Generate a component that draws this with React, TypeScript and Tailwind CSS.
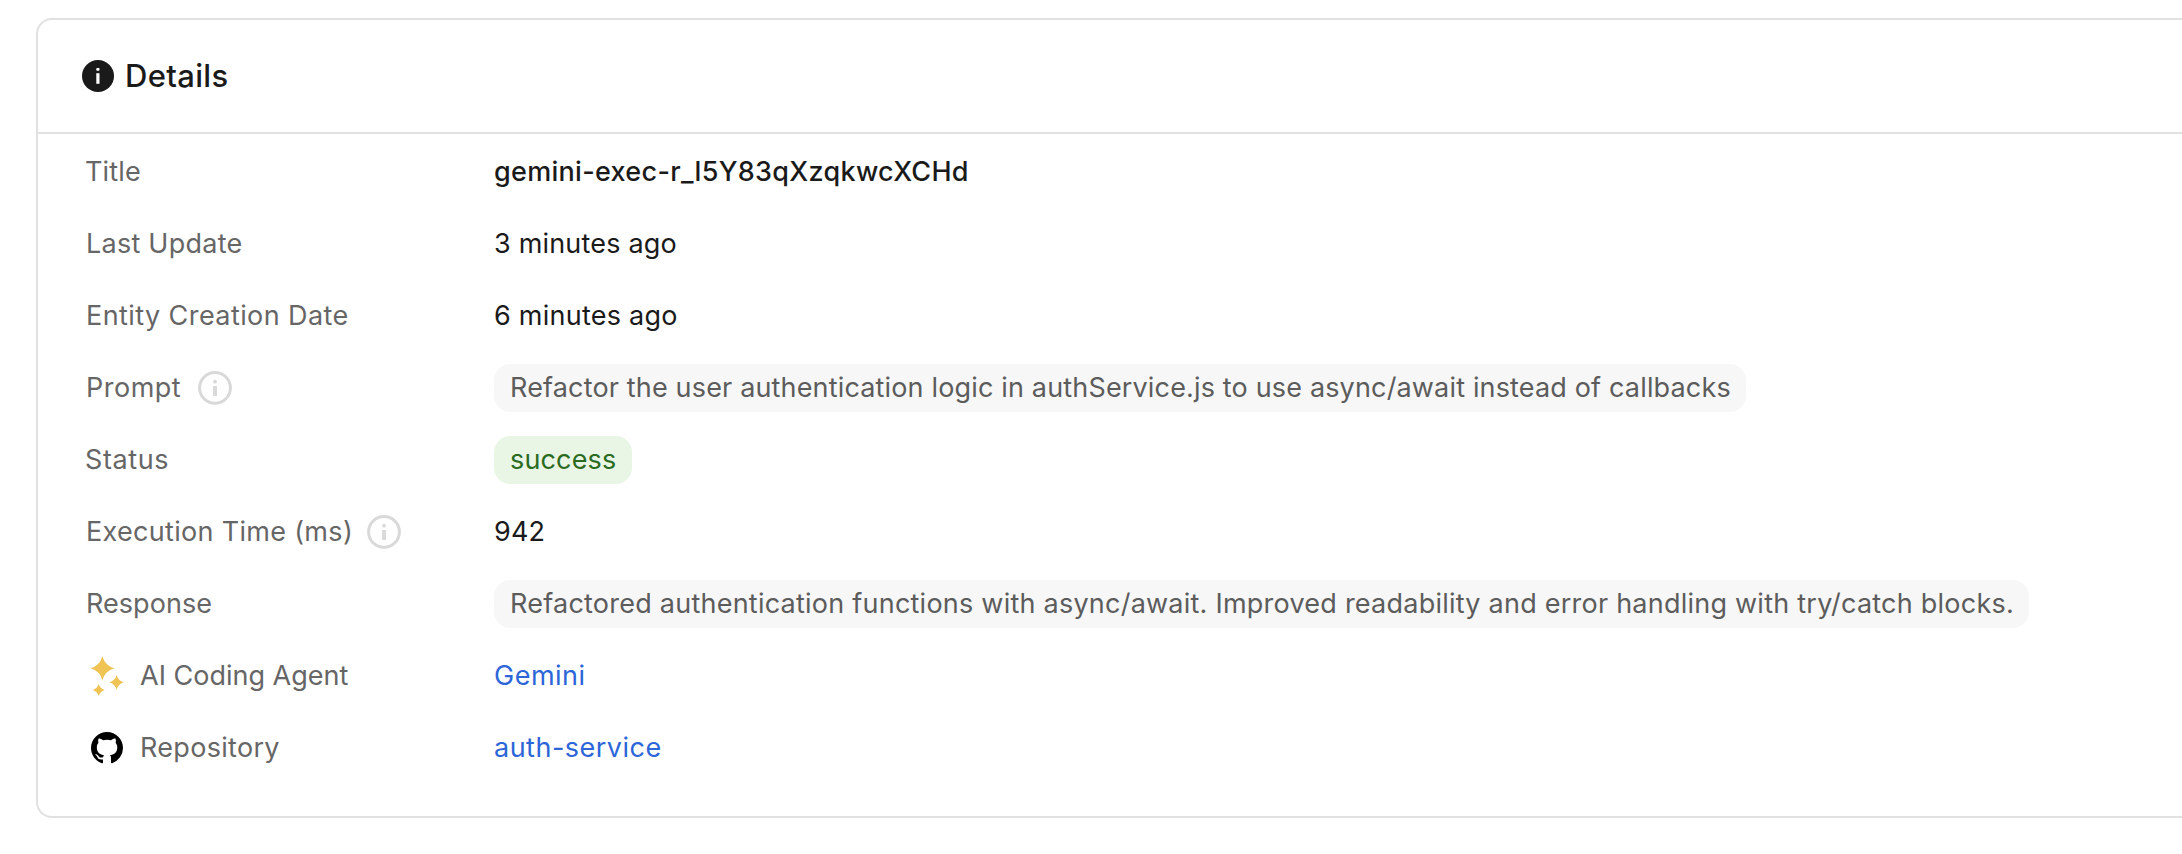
import type { ReactNode } from "react";

function SolidInfoIcon() {
  return (
    <svg className="size-8 shrink-0" viewBox="0 0 32 32">
      <circle cx="16" cy="16" r="16" fill="#1a1a1a" />
      <rect x="14.3" y="8" width="3.2" height="2.8" rx="0.8" fill="#fff" />
      <rect x="14.3" y="13.2" width="3.2" height="10.6" fill="#fff" />
    </svg>
  );
}

function InfoIcon() {
  return (
    <svg className="size-10 shrink-0" viewBox="0 0 40 40">
      <circle cx="20" cy="19.9" r="15.4" fill="none" stroke="#d9d9d9" strokeWidth="3" />
      <circle cx="20" cy="13.7" r="1.9" fill="#d9d9d9" />
      <rect x="18.1" y="18" width="3.9" height="10" fill="#d9d9d9" />
    </svg>
  );
}

function SparklesIcon() {
  return (
    <svg className="h-10 w-[42px] shrink-0" viewBox="0 0 42 40" fill="#efc354">
      <path d="M16.4 0.3Q19 9.7 28.4 12.3Q19 14.9 16.4 24.3Q13.8 14.9 4.4 12.3Q13.8 9.7 16.4 0.3Z" />
      <path d="M30.6 19Q32.3 24.6 37.8 26.3Q32.3 28 30.6 33.6Q28.9 28 23.4 26.3Q28.9 24.6 30.6 19Z" />
      <path d="M12.7 28Q14.1 32.6 18.7 34Q14.1 35.4 12.7 40Q11.3 35.4 6.7 34Q11.3 32.6 12.7 28Z" />
    </svg>
  );
}

function GithubIcon() {
  return (
    <svg className="mx-[5px] size-8 shrink-0" viewBox="0 0 16 16" fill="#000">
      <path d="M8 0C3.58 0 0 3.58 0 8c0 3.54 2.29 6.53 5.47 7.59.4.07.55-.17.55-.38 0-.19-.01-.82-.01-1.49-2.01.37-2.53-.49-2.69-.94-.09-.23-.48-.94-.82-1.13-.28-.15-.68-.52-.01-.53.63-.01 1.08.58 1.23.82.72 1.21 1.87.87 2.33.66.07-.52.28-.87.51-1.07-1.78-.2-3.64-.89-3.64-3.95 0-.87.31-1.59.82-2.15-.08-.2-.36-1.02.08-2.12 0 0 .67-.21 2.2.82.64-.18 1.32-.27 2-.27.68 0 1.36.09 2 .27 1.53-1.04 2.2-.82 2.2-.82.44 1.1.16 1.92.08 2.12.51.56.82 1.27.82 2.15 0 3.07-1.87 3.75-3.65 3.95.29.25.54.73.54 1.48 0 1.07-.01 1.93-.01 2.2 0 .21.15.46.55.38A8.013 8.013 0 0016 8c0-4.42-3.58-8-8-8z" />
    </svg>
  );
}

function Row({ label, children }: { label: ReactNode; children: ReactNode }) {
  return (
    <div className="flex h-[72px] items-center">
      <dt className="flex w-[408px] shrink-0 items-center text-[#666666]">{label}</dt>
      <dd className="flex items-center">{children}</dd>
    </div>
  );
}

export default function App() {
  return (
    <main className="h-[854px] overflow-hidden bg-white pt-[18px] pl-9 font-['Inter',sans-serif] text-[27px] leading-9 whitespace-nowrap text-[#1a1a1a]">
      <section className="h-[800px] rounded-l-2xl border-2 border-r-0 border-[#e1e1e1] bg-white">
        <header className="flex h-[114px] items-center gap-[11px] border-b-2 border-[#e1e1e1] pl-11">
          <SolidInfoIcon />
          <h2 className="text-[31px] font-medium tracking-[0.33px]">Details</h2>
        </header>
        <dl className="pt-0.5 pl-12">
          <Row label={<span className="-ml-px tracking-[0.16px]">Title</span>}>
            <span className="font-medium tracking-[0.3px]">gemini-exec-r_l5Y83qXzqkwcXCHd</span>
          </Row>
          <Row label={<span className="tracking-[0.25px]">Last Update</span>}>
            <span className="tracking-[0.19px]">3 minutes ago</span>
          </Row>
          <Row label={<span className="tracking-[0.42px]">Entity Creation Date</span>}>
            <span className="tracking-[0.25px]">6 minutes ago</span>
          </Row>
          <Row
            label={
              <>
                <span className="w-[109px] tracking-[0.5px]">Prompt</span>
                <InfoIcon />
              </>
            }
          >
            <span className="h-12 w-[1252px] rounded-2xl bg-[#f7f7f7] pt-1.5 pl-4 tracking-[0.16px] text-[#5c5c5c]">
              Refactor the user authentication logic in authService.js to use async/await instead of callbacks
            </span>
          </Row>
          <Row label={<span className="-ml-px tracking-[0.61px]">Status</span>}>
            <span className="h-12 w-[138px] rounded-2xl bg-[#e9f6e6] pt-1.5 pl-4 tracking-[0.157px] text-[#2a6b1f]">
              success
            </span>
          </Row>
          <Row
            label={
              <>
                <span className="w-[278px] tracking-[0.31px]">Execution Time (ms)</span>
                <InfoIcon />
              </>
            }
          >
            <span className="tracking-[0.2px]">942</span>
          </Row>
          <Row label={<span className="tracking-[0.05px]">Response</span>}>
            <span className="h-12 w-[1535px] rounded-2xl bg-[#f7f7f7] pt-1.5 pl-4 tracking-[0.235px] text-[#5c5c5c]">
              Refactored authentication functions with async/await. Improved readability and error handling with
              try/catch blocks.
            </span>
          </Row>
          <Row
            label={
              <>
                <SparklesIcon />
                <span className="ml-3">AI Coding Agent</span>
              </>
            }
          >
            <a className="tracking-[0.5px] text-[#2c66d9]">Gemini</a>
          </Row>
          <Row
            label={
              <>
                <GithubIcon />
                <span className="ml-3 tracking-[0.3px]">Repository</span>
              </>
            }
          >
            <a className="tracking-[0.49px] text-[#2c66d9]">auth-service</a>
          </Row>
        </dl>
      </section>
    </main>
  );
}
